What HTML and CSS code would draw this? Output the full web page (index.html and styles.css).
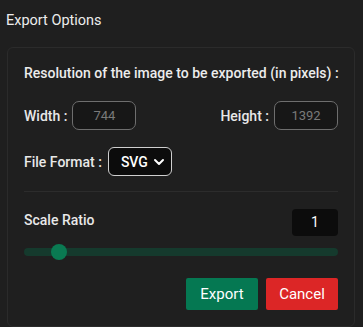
FILE: index.html
```html
<!DOCTYPE html>
<html lang="en">
<head>
  <meta charset="UTF-8">
  <meta name="viewport" content="width=device-width, initial-scale=1.0">
  <title>Export Options</title>
  <link rel="stylesheet" href="styles.css">
</head>
<body>
  <h1 class="title">Export Options</h1>

  <div class="card">
    <p class="heading">Resolution of the image to be exported (in pixels) :</p>

    <div class="size-row">
      <label class="field">Width :
        <input type="text" class="size-input" value="744" readonly>
      </label>
      <label class="field">Height :
        <input type="text" class="size-input" value="1392" readonly>
      </label>
    </div>

    <div class="format-row">
      <label for="file-format">File Format :</label>
      <div class="select-box">
        <span>SVG</span>
        <svg width="12" height="8" viewBox="0 0 12 8"><path d="M2 2l4 4 4-4" fill="none" stroke="#fff" stroke-width="2" stroke-linecap="round" stroke-linejoin="round"/></svg>
      </div>
    </div>

    <hr class="divider">

    <div class="scale-row">
      <span class="scale-label">Scale Ratio</span>
      <span class="scale-value">1</span>
    </div>

    <div class="slider">
      <div class="thumb"></div>
    </div>

    <div class="actions">
      <button class="btn btn-export">Export</button>
      <button class="btn btn-cancel">Cancel</button>
    </div>
  </div>
</body>
</html>
```

FILE: styles.css
```css
body {
  margin: 0;
  background: #1f1f1f;
  color: #e8e8e8;
  font-family: Roboto, "Noto Sans", sans-serif;
  font-size: 14px;
}
.title {
  margin: 0;
  padding: 12px 6px 0;
  font-size: 14.5px;
  font-weight: 400;
  line-height: 18px;
  color: #ececec;
}
.card {
  margin: 17px 8px 0 7px;
  padding: 17px 16px 16px;
  height: 280px;
  box-sizing: border-box;
  border: 1px solid #2b2b2b;
  border-radius: 6px;
}
.heading {
  margin: 0;
  font-size: 14px;
  font-weight: 500;
  line-height: 16px;
  color: #ececec;
  white-space: nowrap;
}
.size-row {
  display: flex;
  justify-content: space-between;
  margin-top: 20px;
}
.field {
  display: flex;
  align-items: center;
  gap: 5px;
  font-weight: 500;
}
.size-input {
  width: 64px;
  height: 29px;
  box-sizing: border-box;
  padding: 0;
  text-align: center;
  font-family: inherit;
  font-size: 13px;
  color: #7a7a7a;
  background: #171717;
  border: 1px solid #6e6e6e;
  border-radius: 7px;
  outline: none;
}
.format-row {
  display: flex;
  align-items: center;
  gap: 6px;
  margin-top: 17px;
  font-weight: 500;
}
.select-box {
  display: flex;
  align-items: center;
  justify-content: space-between;
  width: 64px;
  height: 29px;
  box-sizing: border-box;
  padding: 0 6px 0 12px;
  background: #0c0c0c;
  border: 1px solid #cfcfcf;
  border-radius: 6px;
  font-size: 14px;
  color: #fff;
}
.divider {
  margin: 15px 0 0;
  border: none;
  border-top: 1px solid #2c2c2c;
}
.scale-row {
  display: flex;
  justify-content: space-between;
  align-items: flex-start;
  margin-top: 17px;
}
.scale-label {
  margin-top: 3px;
  font-weight: 500;
}
.scale-value {
  width: 46px;
  height: 27px;
  line-height: 27px;
  text-align: center;
  background: #0c0c0c;
  border-radius: 4px;
  color: #fff;
}
.slider {
  position: relative;
  margin-top: 12px;
  height: 8px;
  background: #153a2d;
  border-radius: 4px;
}
.thumb {
  position: absolute;
  left: 27px;
  top: -4px;
  width: 16px;
  height: 16px;
  border-radius: 50%;
  background: #0a7a52;
}
.actions {
  display: flex;
  justify-content: flex-end;
  gap: 8px;
  margin-top: 22px;
}
.btn {
  width: 72px;
  height: 32px;
  border: none;
  border-radius: 2px;
  font-family: inherit;
  font-size: 15px;
  color: #fff;
}
.btn-export {
  background: #057852;
}
.btn-cancel {
  background: #dc2626;
}
```
